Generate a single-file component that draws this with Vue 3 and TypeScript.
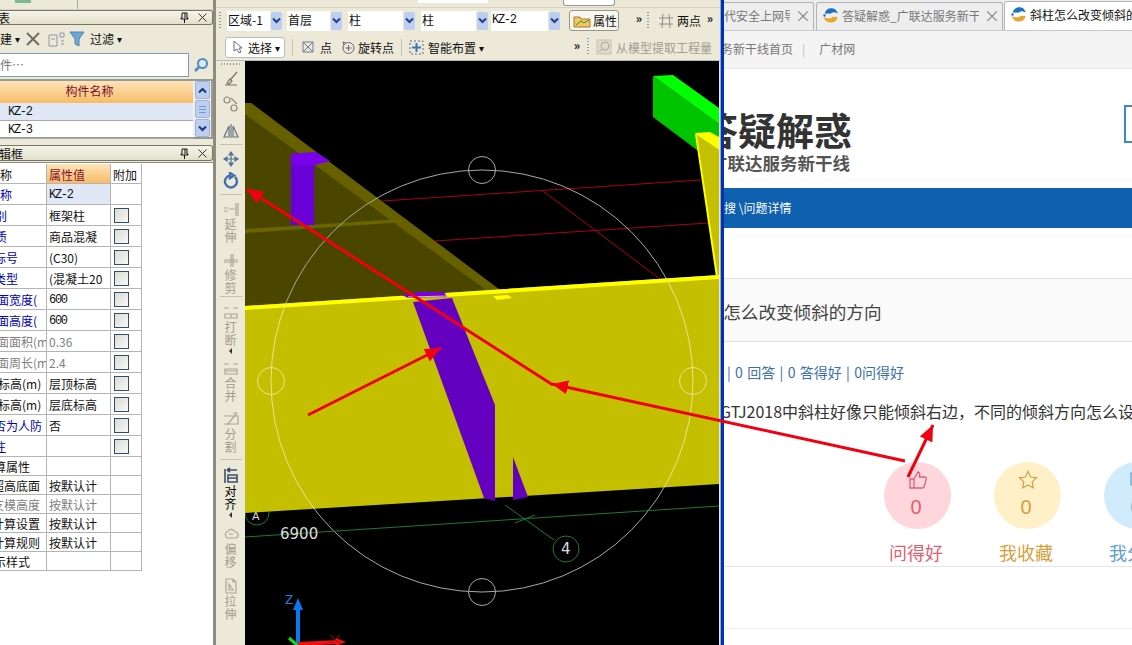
<script setup lang="ts">
interface PropRow {
  label: string
  shift: number
  value?: string
  kind?: 'link' | 'gray'
  valueKind?: 'gray' | 'num' | 'sel'
  check?: boolean
  short?: boolean
}

const propRows: PropRow[] = [
  { label: '名称', shift: -12, value: 'KZ-2', kind: 'link', valueKind: 'sel' },
  { label: '类别', shift: -17, value: '框架柱', kind: 'link', check: true },
  { label: '材质', shift: -17, value: '商品混凝', kind: 'link', check: true },
  { label: '混凝土标号', shift: -42, value: '(C30)', kind: 'link', check: true },
  { label: '混凝土类型', shift: -42, value: '(混凝土20', kind: 'link', check: true },
  { label: '截面宽度(', shift: -15, value: '600', kind: 'link', valueKind: 'num', check: true },
  { label: '截面高度(', shift: -15, value: '600', kind: 'link', valueKind: 'num', check: true },
  { label: '截面面积(m', shift: -15, value: '0.36', kind: 'gray', valueKind: 'gray', check: true },
  { label: '截面周长(m', shift: -15, value: '2.4', kind: 'gray', valueKind: 'gray', check: true },
  { label: '顶标高(m)', shift: -14, value: '层顶标高', check: true },
  { label: '底标高(m)', shift: -14, value: '层底标高', check: true },
  { label: '是否为人防', shift: -18, value: '否', kind: 'link', check: true },
  { label: '备注', shift: -18, kind: 'link', check: true },
  { label: '计算属性', shift: -18, short: true },
  { label: '超高底面', shift: -8, value: '按默认计', short: true },
  { label: '支模高度', shift: -8, value: '按默认计', kind: 'gray', valueKind: 'gray', short: true },
  { label: '计算设置', shift: -8, value: '按默认计', short: true },
  { label: '计算规则', shift: -8, value: '按默认计', short: true },
  { label: '显示样式', shift: -18, short: true },
]

interface Tool {
  d?: string
  label?: string
  h: number
  color?: string
  width?: number
  more?: boolean
  sep?: boolean
}

const tools: Tool[] = [
  { d: 'M3 15h12M5 13l3-4 2 2-3 3zM9 9l6-7', h: 25, color: '#77756a' },
  { d: 'M2 5a3 3 0 1 0 6 0a3 3 0 1 0-6 0M9 13a3 3 0 1 0 6 0a3 3 0 1 0-6 0M9 3l6 6', h: 27, color: '#8b8b80' },
  { d: 'M9 2v14M7 4L2 15h5zM11 4l5 11h-5z', h: 24, color: '#6a7482' },
  { h: 4, sep: true },
  { d: 'M9 2v14M2 9h14M9 2l-2 3h4zM9 16l-2-3h4zM2 9l3-2v4zM16 9l-3-2v4z', h: 22, color: '#4d7296' },
  { d: 'M13 5a6 6 0 1 1-5-1.5M8 1v5l4-2.500z', h: 24, color: '#3f6fb0', width: 2.4 },
  { h: 4, sep: true },
  { d: 'M2 8h4M2 11h4M7 9h6M14 3v13M16 3v13', label: '延伸', h: 51, color: '#aaa89a' },
  { d: 'M2 9h14M2 11h14M9 3v13M11 3v13', label: '修剪', h: 47, color: '#aaa89a' },
  { h: 5, sep: true },
  { d: 'M2 5h5M11 5h5M3 11h12v4H3zM9 11v4', label: '打断', h: 56, color: '#aaa89a', more: true },
  { d: 'M2 5h5M11 5h5M3 10h12v5H3zM3 12h12', label: '合并', h: 51, color: '#aaa89a' },
  { d: 'M2 6h14v8H2M5 15L15 3M11 3l4 0', label: '分割', h: 50, color: '#aaa89a' },
  { h: 7, sep: true },
  { d: 'M3 2v14M5 3h10M5 3l3-2M5 3l3 2M6 8h9v7H6zM6 11h9', label: '对齐', h: 58, color: '#3f4f6a', more: true, width: 1.6 },
  { d: 'M5 13a4 4 0 0 1 1-7a4 4 0 0 1 7 1a3 3 0 0 1 0 6zM7 9h4', label: '偏移', h: 52, color: '#aaa89a' },
  { d: 'M4 2h7l3 3v11H4zM11 2v3h3M7 7l4 6H7z', label: '拉伸', h: 52, color: '#aaa89a' },
]

const selects = [
  { text: '区域-1', w: 43, gap: 5 },
  { text: '首层', w: 43, gap: 6 },
  { text: '柱', w: 55, gap: 6 },
  { text: '柱', w: 55, gap: 3 },
  { text: 'KZ-2', w: 57, gap: 9 },
]

const tabs = [
  { text: '新一代安全上网导', lead: -24, w: 90, icon: false, on: false },
  { text: '答疑解惑_广联达服务新干', lead: 0, w: 187, icon: true, on: false },
  { text: '斜柱怎么改变倾斜的方向_答疑解惑', lead: 0, w: 200, icon: true, on: true },
]

const actions = [
  { name: '问得好', cls: 'pink' },
  { name: '我收藏', cls: 'amber' },
  { name: '我分享', cls: 'sky' },
]

const arrows = [
  { x1: 905, y1: 461, x2: 552, y2: 384 },
  { x1: 553, y1: 385, x2: 247, y2: 189 },
  { x1: 308, y1: 415, x2: 441, y2: 348 },
  { x1: 908, y1: 477, x2: 933, y2: 425 },
]
</script>

<template>
  <div class="screen">
    <div class="cad">
      <!-- left dock -->
      <aside class="side">
        <div class="strip"><span class="green-chip"></span><span class="strip-line"></span></div>
        <div class="title-bar">
          <span class="title-text list-title">构件列表</span>
          <svg class="pin" width="9" height="11" viewBox="0 0 9 11"><path d="M2 1h5v5h1v1H1V6h1zM4.500 7v4M5 1v5" fill="none" stroke="#111" /></svg>
          <svg class="close-x" width="9" height="9" viewBox="0 0 9 9"><path d="M.5.5l8 8M8.500.5l-8 8" stroke="#333" /></svg>
        </div>
        <div class="side-tools">
          <span class="new-btn">新建</span><span class="tri">▾</span>
          <svg class="tool-x" width="14" height="14" viewBox="0 0 14 14"><path d="M1 1l12 12M13 1L1 13" stroke="#6d6d66" stroke-width="2" /></svg>
          <svg class="tool-copy" width="18" height="16" viewBox="0 0 18 16"><path d="M1 4h8v11H1zM3 8h4M12 2h4v4h-4zM13 10h3M13 13h3" fill="none" stroke="#8c96a4" /></svg>
          <svg class="tool-funnel" width="16" height="16" viewBox="0 0 16 16"><path d="M1 1h14L10 8v7l-4-2V8z" fill="#6ea6d8" stroke="#5582aa" /></svg>
          <span class="filter-label">过滤</span><span class="tri">▾</span>
        </div>
        <div class="search-row">
          <div class="search-box"><span>搜索构件…</span></div>
          <svg width="16" height="16" viewBox="0 0 16 16"><circle cx="9.5" cy="6.5" r="4.5" fill="#dcebf8" stroke="#4c8cc8" stroke-width="2" /><path d="M6 10l-4 4" stroke="#4c8cc8" stroke-width="2.500" /></svg>
        </div>
        <div class="list">
          <div class="list-body">
            <div class="list-head">构件名称</div>
            <div class="list-row active">KZ-2</div>
            <div class="list-row">KZ-3</div>
          </div>
          <div class="scroll">
            <span class="scroll-btn"><svg width="9" height="7" viewBox="0 0 9 7"><path d="M1 5.500l3.500-3.500 3.500 3.500" fill="none" stroke="#1c3478" stroke-width="2" /></svg></span>
            <span class="scroll-btn"><svg width="9" height="9" viewBox="0 0 9 9"><path d="M1 1.500h7M1 4.500h7M1 7.500h7" stroke="#7c96cc" /></svg></span>
            <span class="scroll-btn"><svg width="9" height="7" viewBox="0 0 9 7"><path d="M1 1.500l3.500 3.500 3.500-3.500" fill="none" stroke="#1c3478" stroke-width="2" /></svg></span>
          </div>
        </div>
        <div class="title-bar second">
          <span class="title-text prop-title">属性编辑框</span>
          <svg class="pin" width="9" height="11" viewBox="0 0 9 11"><path d="M2 1h5v5h1v1H1V6h1zM4.500 7v4M5 1v5" fill="none" stroke="#111" /></svg>
          <svg class="close-x" width="9" height="9" viewBox="0 0 9 9"><path d="M.5.5l8 8M8.500.5l-8 8" stroke="#333" /></svg>
        </div>
        <div class="props">
          <div class="prop-row head">
            <div class="cell c-name"><span :style="{ marginLeft: '-12px' }">名称</span></div>
            <div class="cell c-val orange">属性值</div>
            <div class="cell c-add">附加</div>
          </div>
          <div v-for="row in propRows" :key="row.label" class="prop-row" :class="{ short: row.short }">
            <div class="cell c-name" :class="row.kind"><span :style="{ marginLeft: row.shift + 'px' }">{{ row.label }}</span></div>
            <div class="cell c-val" :class="row.valueKind">{{ row.value }}</div>
            <div class="cell c-add"><span v-if="row.check" class="check"></span></div>
          </div>
        </div>
      </aside>

      <div class="main">
        <div class="top-tools">
          <div class="strip top-strip"><span class="strip-input"></span><span class="strip-btn"></span></div>
          <div class="tool-row">
            <span class="grip"></span>
            <template v-for="(sel, i) in selects" :key="i">
              <span class="sel-field" :class="{ latin: sel.text === 'KZ-2' }" :style="{ width: sel.w + 'px' }">{{ sel.text }}</span>
              <span class="sel-btn" :style="{ marginRight: sel.gap + 'px' }"><svg width="9" height="7" viewBox="0 0 9 7"><path d="M1 1.500l3.500 3.500 3.500-3.500" fill="none" stroke="#24408a" stroke-width="2" /></svg></span>
            </template>
            <span class="prop-btn">
              <svg width="18" height="14" viewBox="0 0 18 14"><path d="M1 3h6l1 2h9v8H1z" fill="#f0c860" stroke="#a87830" /><path d="M3 11l5-4 3 2 5-3" stroke="#3e8a3a" fill="none" /></svg>
              属性
            </span>
            <span class="chev first">»</span>
            <span class="grip"></span>
            <svg class="two-icon" width="16" height="16" viewBox="0 0 16 16"><path d="M1 5h14M1 11h14M5 1l-1 14M11 1l1 14" stroke="#8d8d84" fill="none" /></svg>
            <span class="two-label">两点</span>
            <span class="chev">»</span>
          </div>
          <div class="tool-row second-row">
            <span class="pick-btn">
              <svg width="12" height="14" viewBox="0 0 12 14"><path d="M2 1v10l3-2 2 4 2-1-2-4h3z" fill="#fff" stroke="#66707c" /></svg>
              <span>选择</span><span class="tri">▾</span>
            </span>
            <span class="bar"></span>
            <svg class="i-point" width="12" height="12" viewBox="0 0 12 12"><path d="M1 1h10v10H1zM1 1l10 10M11 1L1 11" fill="none" stroke="#6a7a96" /></svg>
            <span class="t-point">点</span>
            <svg class="i-rot" width="16" height="16" viewBox="0 0 16 16"><circle cx="8.5" cy="9" r="5.5" fill="none" stroke="#667" /><path d="M8.500 6v6M5.500 9h6M3 3l3 1-2 2z" stroke="#667" fill="none" /></svg>
            <span class="t-rot">旋转点</span>
            <span class="bar"></span>
            <svg class="i-smart" width="15" height="15" viewBox="0 0 15 15"><rect x="1" y="1" width="13" height="13" fill="none" stroke="#667" stroke-dasharray="2 2" /><path d="M7.500 3v9M3 7.500h9" stroke="#3a78b8" stroke-width="2" /></svg>
            <span class="t-smart">智能布置</span><span class="tri">▾</span>
            <span class="chev second-chev">»</span>
            <span class="grip low"></span>
            <svg class="i-take" width="16" height="16" viewBox="0 0 16 16"><rect x="1" y="1" width="14" height="14" fill="#dedbc8" stroke="#c4c1ae" /><circle cx="9" cy="7" r="4" fill="none" stroke="#aaa89a" /><path d="M6 10l-3 3" stroke="#aaa89a" /></svg>
            <span class="t-take">从模型提取工程量</span>
          </div>
        </div>

        <div class="work">
          <div class="vtools">
            <div class="vgrip"></div>
            <template v-for="(tool, i) in tools" :key="i">
              <div v-if="tool.sep" class="vsep" :style="{ height: tool.h + 'px' }"></div>
              <div v-else class="vtool" :style="{ height: tool.h + 'px' }">
                <svg width="18" height="18" viewBox="0 0 18 18"><path :d="tool.d" fill="none" :stroke="tool.color" :stroke-width="tool.width ?? 1.2" /></svg>
                <span v-if="tool.label" class="vlabel" :style="{ color: tool.label === '对齐' ? '#000' : '#a09e90' }">{{ tool.label }}</span>
                <span v-if="tool.more" class="vmore"></span>
              </div>
            </template>
          </div>

          <!-- model view -->
          <svg class="view" viewBox="245 61 474 584" width="474" height="584">
            <defs>
              <clipPath id="slab"><polygon points="245,306 719,275 719,484 245,513" /></clipPath>
            </defs>
            <rect x="245" y="61" width="474" height="584" fill="#000" />
            <polygon points="245,103 251,103 500,290 500,310 245,310" fill="#4a4600" />
            <polygon points="245,103 251,103 500,290 486,290 245,114" fill="#666000" />
            <polygon points="245,229 402,219 404,222 245,233" fill="#6b6500" />
            <polygon points="291,154 315,152 330,161 314,165 314,225 291,225" fill="#6a00d8" />
            <polygon points="291,154 315,152 330,161 314,165 291,165" fill="#7a00ee" />
            <polygon points="653,76 673,75 719,108 719,124" fill="#00ff00" />
            <polygon points="653,76 719,124 719,150 697,150 653,117" fill="#00c400" />
            <polygon points="697,135 719,150 719,278 717,278" fill="#c4bf00" />
            <polygon points="695,133 710,132 719,137 719,150 697,135" fill="#ffff00" />
            <line x1="696" y1="134" x2="717" y2="277" stroke="#ffff00" stroke-width="2" />
            <g stroke="#a80018" fill="none">
              <line x1="382" y1="201" x2="701" y2="180" />
              <line x1="435" y1="241" x2="708" y2="223" />
              <line x1="543" y1="191" x2="660" y2="279" />
            </g>
            <circle cx="257" cy="513" r="12" fill="none" stroke="#1a7a30" />
            <text x="252" y="520" class="grid-text small">A</text>
            <g fill="none" stroke="#a8a8a0">
              <circle cx="482" cy="381" r="211" />
              <circle cx="482" cy="170" r="13.5" />
              <circle cx="482" cy="592" r="13.5" />
            </g>
            <polygon points="245,306 719,275 719,484 245,513" fill="#c4bf00" />
            <polygon points="245,306 719,275 719,279 245,310" fill="#ffff00" />
            <polygon points="493,296 508,295 512,298 497,300" fill="#ffff00" />
            <polygon points="413,302 452,298 495,405 495,501 484,498" fill="#6400c0" />
            <polygon points="513,457 528,497 513,500" fill="#6400c0" />
            <polygon points="402,295 418,292 444,292 447,297 408,298" fill="#7a00e0" />
            <line x1="408" y1="297" x2="448" y2="296" stroke="#d8c8a0" />
            <g fill="none" stroke="#e6e68c" clip-path="url(#slab)">
              <circle cx="482" cy="381" r="211" />
              <circle cx="271" cy="381" r="13.5" />
              <circle cx="693" cy="381" r="13.5" />
            </g>
            <g stroke="#1a7a30" fill="none">
              <line x1="245" y1="537" x2="719" y2="506" />
              <line x1="515" y1="523" x2="535" y2="515" />
              <line x1="505" y1="505" x2="554" y2="540" />
              <circle cx="566" cy="549" r="13" />
            </g>
            <text x="280" y="539" class="grid-text">6900</text>
            <text x="561" y="554" class="grid-text">4</text>
            <text x="285" y="604" class="axis-z">Z</text>
            <line x1="298" y1="608" x2="298" y2="645" stroke="#0a78f0" stroke-width="4" />
            <polygon points="298,598 303,610 293,610" fill="#0a78f0" />
            <line x1="298" y1="644" x2="338" y2="642" stroke="#f01010" stroke-width="4" />
            <polygon points="346,642 336,638 336,646" fill="#f01010" />
            <path d="M330 635l10 9M340 635l-10 9" stroke="#a01010" />
            <line x1="289" y1="638" x2="297" y2="645" stroke="#10e010" stroke-width="3" />
          </svg>
        </div>
      </div>
    </div>

    <div class="edge"></div>

    <!-- browser window -->
    <section class="browser">
      <div class="tabs">
        <div v-for="tab in tabs" :key="tab.text" class="tab" :class="{ on: tab.on }" :style="{ width: tab.w + 'px' }">
          <svg v-if="tab.icon" width="17" height="15" viewBox="0 0 17 15">
            <path d="M3.500 5.500a6 6 0 0 1 11-1.500q-4-1.500-7 1.500" fill="#1a72c0" stroke="#1a72c0" stroke-width="1.400" />
            <path d="M15 9a6.500 6.500 0 0 1-12 1.500q5 2 9-1.500" fill="#eaa42c" stroke="#eaa42c" stroke-width="1.400" />
            <circle cx="2.500" cy="7.500" r="1.200" fill="#1a72c0" />
          </svg>
          <span class="tab-text" :style="{ marginLeft: tab.lead + 'px' }">{{ tab.text }}</span>
          <span v-if="!tab.on" class="tab-close">×</span>
        </div>
      </div>
      <div class="site-nav">
        <span class="nav-home">广联达服务新干线首页</span>
        <span class="nav-bar">|</span>
        <span>广材网</span>
      </div>
      <div class="logo-band">
        <div class="logo">
          <div class="logo-main">答疑解惑</div>
          <div class="logo-sub">广联达服务新干线</div>
        </div>
        <div class="search-edge"></div>
      </div>
      <div class="crumb"><span>答疑搜 \问题详情</span></div>
      <div class="question-title"><span>斜柱怎么改变倾斜的方向</span></div>
      <div class="stats">| 0 回答 | 0 答得好 | 0问得好</div>
      <div class="question-body">GTJ2018中斜柱好像只能倾斜右边，不同的倾斜方向怎么设置</div>
      <div class="actions">
        <div v-for="act in actions" :key="act.name" class="action" :class="act.cls">
          <div class="disc">
            <svg v-if="act.cls === 'pink'" width="20" height="20" viewBox="0 0 20 20"><path d="M2 9h4v9H2zM6 9l4-7c2 0 2 2 1.500 5H17c1.500 0 1.500 2 1 3l-2 7c-.3 1-1 1-2 1H6" fill="none" stroke="currentColor" stroke-width="1.300" /></svg>
            <svg v-else-if="act.cls === 'amber'" width="20" height="20" viewBox="0 0 20 20"><path d="M10 1.500l2.600 5.500 6 .8-4.400 4.100 1.100 6-5.300-3-5.300 3 1.100-6L1.400 7.800l6-.8z" fill="none" stroke="currentColor" stroke-width="1.200" /></svg>
            <svg v-else width="20" height="20" viewBox="0 0 20 20"><path d="M3 3h14v12H3z" fill="none" stroke="currentColor" stroke-width="1.200" /></svg>
            <span class="count">0</span>
          </div>
          <div class="action-name">{{ act.name }}</div>
        </div>
      </div>
      <div class="rule-gap"></div>
    </section>

    <!-- hand drawn arrows over the whole shot -->
    <svg class="marks" viewBox="0 0 1132 645" width="1132" height="645">
      <defs>
        <marker id="head" markerUnits="userSpaceOnUse" markerWidth="17" markerHeight="14" refX="16" refY="7" orient="auto">
          <path d="M0 0L16 7L0 14z" fill="#f00010" />
        </marker>
      </defs>
      <line
        v-for="(a, i) in arrows"
        :key="i"
        :x1="a.x1"
        :y1="a.y1"
        :x2="a.x2"
        :y2="a.y2"
        stroke="#f00010"
        stroke-width="3"
        marker-end="url(#head)"
      />
    </svg>
  </div>
</template>

<style scoped>
.screen {
  position: relative;
  display: flex;
  width: 1132px;
  height: 645px;
  overflow: hidden;
  background: #fff;
  font-family: "Noto Sans CJK SC", "Liberation Sans", sans-serif;
  font-size: 12px;
  color: #111;
}

.cad {
  display: flex;
  width: 720px;
  flex: none;
  background: #ece9d8;
}

/* left dock */
.side {
  width: 213px;
  flex: none;
  display: flex;
  flex-direction: column;
  border-right: 3px solid #8e8c80;
  overflow: hidden;
}

.strip {
  height: 9px;
  flex: none;
  display: flex;
  position: relative;
  border-bottom: 1px solid #d6d3c0;
}

.green-chip {
  width: 16px;
  height: 3px;
  margin-left: 15px;
  background: #7fb890;
}

.strip-line {
  width: 1px;
  margin-left: 46px;
  background: #aaa89a;
}

.title-bar {
  height: 15px;
  box-sizing: border-box;
  flex: none;
  display: flex;
  align-items: center;
  border: 1px solid #77756a;
  border-left: 0;
  border-radius: 0 3px 3px 0;
  background: linear-gradient(#f6f4e8, #e2dfca);
  line-height: 15px;
}

.title-bar.second {
  margin-top: 6px;
  height: 16px;
}

.title-text {
  flex: 1;
  white-space: nowrap;
}

.list-title {
  margin-left: -38px;
}

.prop-title {
  margin-left: -37px;
}

.pin {
  flex: none;
  margin-right: 9px;
}

.close-x {
  flex: none;
  margin-right: 5px;
}

.side-tools {
  height: 27px;
  flex: none;
  display: flex;
  align-items: center;
}

.new-btn {
  margin-left: -12px;
}

.tri {
  margin-left: 3px;
  font-size: 10px;
}

.tool-x {
  margin-left: 6px;
}

.tool-copy {
  margin-left: 8px;
}

.tool-funnel {
  margin-left: 3px;
}

.filter-label {
  margin-left: 5px;
}

.search-row {
  height: 26px;
  flex: none;
  display: flex;
  align-items: center;
  gap: 4px;
}

.search-box {
  width: 189px;
  height: 24px;
  box-sizing: border-box;
  line-height: 21px;
  background: #fff;
  border: 1px solid #7f9db9;
  border-left: 0;
  color: #777;
  overflow: hidden;
  white-space: nowrap;
}

.search-box span {
  margin-left: -36px;
  display: inline-block;
}

.list {
  height: 60px;
  flex: none;
  margin-top: 1px;
  box-sizing: border-box;
  display: flex;
  border: 2px solid #9a9a94;
  border-left: 0;
  background: #fff;
}

.list-body {
  flex: 1;
}

.list-head {
  height: 22px;
  line-height: 19px;
  text-align: center;
  padding-right: 14px;
  color: #7a1030;
  background: linear-gradient(#fde4b8, #f6bc68);
}

.list-row {
  height: 18px;
  box-sizing: border-box;
  line-height: 19px;
  padding-left: 8px;
  font-family: "Liberation Mono", monospace;
  font-size: 12px;
  letter-spacing: -1.3px;
  border-bottom: 1px solid #aaa;
}

.list-row.active {
  background: #dfe8f4;
}

.scroll {
  width: 18px;
  flex: none;
  display: flex;
  flex-direction: column;
  gap: 1px;
  background: #f0f0ea;
  align-items: center;
}

.scroll-btn {
  width: 15px;
  flex: 1;
  display: flex;
  align-items: center;
  justify-content: center;
  background: #bccff0;
  border: 1px solid #9fb4dc;
  box-sizing: border-box;
  border-radius: 2px;
}

.props {
  flex: 1;
  margin-top: 1px;
  padding-top: 1px;
  background: #fff;
  border-top: 1px solid #8e8c80;
}

.prop-row {
  display: flex;
  height: 21px;
  box-sizing: border-box;
  width: 142px;
  border-bottom: 1px solid #b4b4b4;
  white-space: nowrap;
  line-height: 22px;
}

.prop-row.head {
  height: 20px;
  line-height: 21px;
}

.prop-row.short {
  height: 19px;
  line-height: 20px;
}

.cell {
  box-sizing: border-box;
  overflow: hidden;
  border-right: 1px solid #b4b4b4;
}

.c-name {
  width: 47px;
}

.c-name span {
  display: inline-block;
}

.c-name.link {
  color: #0000b0;
}

.c-name.gray,
.c-val.gray {
  color: #808080;
}

.c-val {
  width: 64px;
  padding-left: 2px;
}

.c-val.sel {
  background: #dfe8f4;
  font-family: "Liberation Mono", monospace;
  letter-spacing: -1.3px;
}

.c-val.num {
  font-family: "Liberation Mono", monospace;
  letter-spacing: -1.3px;
}

.c-val.orange {
  color: #8a1030;
  background: linear-gradient(#fde4b8, #f6bc68);
}

.c-add {
  width: 31px;
  padding-left: 2px;
}

.check {
  display: block;
  width: 13px;
  height: 13px;
  margin: 3px 0 0 1px;
  border: 1px solid #2f4f6f;
  background: linear-gradient(135deg, #dcdcd4, #f8f8f6);
}

/* toolbars */
.main {
  width: 504px;
  flex: none;
  display: flex;
  flex-direction: column;
}

.top-tools {
  height: 61px;
  flex: none;
  box-sizing: border-box;
  border-bottom: 1px solid #bbb;
}

.top-strip {
  height: 7px;
}

.strip-input {
  width: 70px;
  height: 3px;
  margin-left: 202px;
  background: #fff;
}

.strip-btn {
  width: 50px;
  height: 5px;
  margin-left: 75px;
  background: #fff;
  border: 1px solid #999;
  border-top: 0;
  border-radius: 0 0 3px 3px;
}

.tool-row {
  height: 25px;
  display: flex;
  align-items: center;
  white-space: nowrap;
}

.grip {
  width: 2px;
  height: 18px;
  margin: 0 6px 0 3px;
  background-image: linear-gradient(#999 50%, transparent 50%);
  background-size: 2px 3px;
}

.sel-field {
  height: 20px;
  line-height: 18px;
  padding-left: 1px;
  box-sizing: border-box;
  background: #fff;
  overflow: hidden;
}

.sel-field.latin {
  font-family: "Liberation Mono", monospace;
  letter-spacing: -1.3px;
}

.sel-btn {
  width: 11px;
  height: 18px;
  display: flex;
  align-items: center;
  justify-content: center;
  margin-left: 1px;
  background: #bccff0;
  border-radius: 2px;
}

.prop-btn {
  width: 50px;
  height: 21px;
  box-sizing: border-box;
  display: flex;
  align-items: center;
  gap: 2px;
  padding-left: 3px;
  border: 1px solid #98968a;
  border-radius: 3px;
  background: #f8f7f0;
}

.chev {
  width: 10px;
  font-size: 12px;
  font-weight: 700;
  margin-top: -6px;
  text-align: center;
}

.chev.first {
  margin: -6px 0 0 15px;
}

.two-icon {
  margin-left: 3px;
}

.two-label {
  margin: 0 4px 0 3px;
}

.second-row {
  height: 24px;
  margin-top: 2px;
  padding-left: 9px;
}

.pick-btn {
  width: 60px;
  height: 21px;
  box-sizing: border-box;
  display: flex;
  align-items: center;
  gap: 4px;
  padding-left: 6px;
  background: #fff;
  border: 1px solid #bbb;
  border-radius: 3px;
}

.pick-btn .tri {
  margin-left: -1px;
}

.bar {
  width: 1px;
  height: 17px;
  margin: 0 7px;
  background: #c4c1ae;
}

.i-point {
  margin-left: 2px;
}

.t-point {
  margin-left: 6px;
}

.i-rot {
  margin-left: 8px;
}

.t-rot {
  margin-left: 2px;
}

.t-smart {
  margin-left: 4px;
}

.second-chev {
  margin-left: 88px;
}

.grip.low {
  margin: 0 6px 0 5px;
}

.i-take {
  margin-left: 1px;
}

.t-take {
  margin-left: 4px;
  color: #a09e90;
}

/* vertical tool strip */
.work {
  flex: 1;
  display: flex;
  min-height: 0;
}

.vtools {
  width: 29px;
  flex: none;
  overflow: hidden;
}

.vgrip {
  height: 5px;
  margin: 0 5px;
  background-image: linear-gradient(90deg, #999 50%, transparent 50%);
  background-size: 3px 2px;
  background-repeat: repeat-x;
  background-position: 0 2px;
}

.vsep {
  display: flex;
  align-items: center;
}

.vsep::after {
  content: "";
  width: 22px;
  height: 1px;
  margin-left: 4px;
  background: #c4c1ae;
}

.vtool {
  display: flex;
  flex-direction: column;
  align-items: center;
  padding-top: 4px;
  box-sizing: border-box;
}

.vlabel {
  width: 12px;
  line-height: 12.5px;
  text-align: center;
}

.vmore {
  width: 0;
  height: 0;
  margin-top: 2px;
  border: 3px solid transparent;
  border-right-color: #333;
  border-left-width: 0;
}

.view {
  display: block;
  flex: none;
}

.grid-text {
  font-family: "DejaVu Sans", sans-serif;
  font-size: 15px;
  fill: #ddd;
}

.grid-text.small {
  font-size: 11px;
}

.axis-z {
  font-family: "DejaVu Sans", sans-serif;
  font-size: 12px;
  fill: #2a7ae8;
}

.edge {
  width: 4px;
  flex: none;
  border-left: 1px solid #9ab;
  box-sizing: border-box;
  background: #0030c0;
}

/* browser */
.browser {
  flex: 1;
  min-width: 0;
  overflow: hidden;
}

.tabs {
  height: 31px;
  display: flex;
  align-items: flex-end;
  gap: 2px;
  background: #ececec;
  border-bottom: 1px solid #c8c8c8;
  box-sizing: border-box;
}

.tab {
  height: 28px;
  flex: none;
  box-sizing: border-box;
  display: flex;
  align-items: center;
  gap: 3px;
  padding: 0 0 3px 5px;
  border: 1px solid #b4b4b4;
  border-bottom: 0;
  border-radius: 3px 3px 0 0;
  background: #eeeeee;
  color: #777;
  white-space: nowrap;
  overflow: hidden;
}

.tab:first-child {
  border-left: 0;
  padding-left: 0;
  border-radius: 0 3px 0 0;
}

.tab.on {
  background: #fff;
  color: #111;
  height: 29px;
  margin-left: -1px;
}

.tab-text {
  flex: 1;
  min-width: 0;
  overflow: hidden;
}

.tab-close {
  width: 20px;
  flex: none;
  text-align: center;
  font-size: 16px;
  color: #888;
}

.site-nav {
  height: 38px;
  box-sizing: border-box;
  display: flex;
  align-items: center;
  padding-bottom: 2px;
  color: #777;
  background: #f4f4f4;
  border-bottom: 1px solid #e8e8e8;
  white-space: nowrap;
}

.nav-home {
  margin-left: -51px;
}

.nav-bar {
  margin: 0 14px 0 9px;
  color: #bbb;
}

.logo-band {
  height: 119px;
  display: flex;
  justify-content: space-between;
  position: relative;
  overflow: hidden;
}

.logo {
  margin-top: 37px;
  white-space: nowrap;
}

.logo-main {
  margin-left: -24px;
  font-size: 38px;
  line-height: 46px;
  font-weight: 700;
  color: #333;
}

.logo-sub {
  margin-left: -14px;
  font-size: 17.500px;
  line-height: 22px;
  font-weight: 700;
  color: #555;
}

.search-edge {
  width: 8px;
  height: 38px;
  margin-top: 36px;
  box-sizing: border-box;
  border: 2px solid #3a8ac8;
  border-right: 0;
}

.crumb {
  height: 40px;
  line-height: 39px;
  background: #1060b0;
  color: #fff;
  white-space: nowrap;
}

.crumb span {
  margin-left: -24px;
  display: inline-block;
}

.question-title {
  height: 64px;
  margin-top: 50px;
  box-sizing: border-box;
  line-height: 66px;
  font-size: 17.6px;
  color: #444;
  background: #fafafa;
  border-top: 1px solid #e4e4e4;
  border-bottom: 1px solid #e0e0e0;
  white-space: nowrap;
}

.question-title span {
  margin-left: -36px;
  display: inline-block;
}

.stats {
  margin: 20px 0 0 3px;
  line-height: 20px;
  font-size: 14px;
  word-spacing: 1.2px;
  color: #3a72a8;
  white-space: nowrap;
}

.question-body {
  margin: 18px 0 0 -4px;
  line-height: 22px;
  font-size: 16px;
  color: #333;
  white-space: nowrap;
}

.actions {
  display: flex;
  gap: 43px;
  padding-left: 160px;
  margin-top: 40px;
  height: 105px;
  box-sizing: border-box;
  width: 500px;
  border-bottom: 1px solid #e4e4e4;
}

.action {
  width: 67px;
  flex: none;
  text-align: center;
}

.disc {
  width: 67px;
  height: 67px;
  border-radius: 50%;
  display: flex;
  flex-direction: column;
  align-items: center;
  padding-top: 8px;
  box-sizing: border-box;
}

.disc svg {
  display: block;
}

.count {
  margin: 4px 3px 0 0;
  font-size: 20px;
  line-height: 26px;
  font-family: "Liberation Sans", sans-serif;
}

.action-name {
  margin-top: 10px;
  padding-right: 3px;
  font-size: 18px;
  line-height: 26px;
  white-space: nowrap;
}

.pink {
  color: #e06070;
}

.pink .disc {
  background: #ffd6dc;
}

.amber {
  color: #d4a040;
}

.amber .disc {
  background: #fff0c8;
}

.sky {
  color: #5fa0d0;
}

.sky .disc {
  background: #d0ecfc;
}

.rule-gap {
  height: 61px;
  border-bottom: 1px solid #eee;
}

.marks {
  position: absolute;
  left: 0;
  top: 0;
  pointer-events: none;
}
</style>
